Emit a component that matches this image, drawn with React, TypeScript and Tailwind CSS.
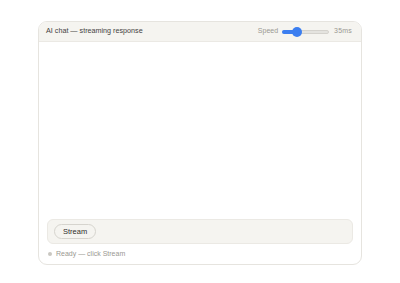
import { useState } from 'react';

export default function App() {
    const [speed, setSpeed] = useState(35);
    const pct = ((speed - 5) / (100 - 5)) * 100;

    return (
        <div className="w-[400px] h-[283px] bg-white pt-[21px] pl-[38px]" style={{ fontFamily: '"Liberation Sans", Arial, sans-serif' }}>
            <div className="w-[324px] h-[244px] rounded-[9px] border border-[#e6e4df] overflow-hidden flex flex-col">
                {/* Header */}
                <div className="h-[20px] bg-[#f5f4f0] border-b border-[#ebe9e4] flex items-center justify-between pl-[7px] pr-[9px]">
                    <span className="text-[7.2px] text-[#44423e]">AI chat — streaming response</span>
                    <div className="flex items-center gap-[4px]">
                        <span className="text-[7px] text-[#9a9892]">Speed</span>
                        <div className="relative w-[47px] h-[10px] flex items-center">
                            <div className="w-full h-[4px] rounded-full bg-[#e4e3df] border border-[#d4d2cd]" />
                            <div className="absolute left-0 h-[4px] rounded-full bg-[#3b7ef0]" style={{ width: `${pct}%` }} />
                            <div className="absolute w-[10px] h-[10px] rounded-full bg-[#3b7ef0]" style={{ left: `calc(${pct}% - 5px)` }} />
                            <input
                                type="range"
                                min={5}
                                max={100}
                                value={speed}
                                onChange={e => setSpeed(Number(e.target.value))}
                                className="absolute inset-0 opacity-0 w-full"
                            />
                        </div>
                        <span className="text-[7px] text-[#9a9892] tracking-[0.2px] ml-[1px]">{speed}ms</span>
                    </div>
                </div>

                {/* Messages */}
                <div className="flex-1" />

                {/* Composer */}
                <div className="px-[8px]">
                    <div className="h-[25px] rounded-[6px] bg-[#f5f4f0] border border-[#ebe9e4] flex items-center pl-[6px]">
                        <button className="h-[15px] px-[8px] rounded-full border border-[#d6d4ce] bg-[#f5f4f0] text-[7.5px] text-[#2f2d2a] leading-none">
                            Stream
                        </button>
                    </div>
                </div>
                <div className="h-[20px] flex items-center pl-[9px] gap-[4px]">
                    <span className="w-[4px] h-[4px] rounded-full bg-[#c9c7c1]" />
                    <span className="text-[7px] text-[#9a9892]">Ready — click Stream</span>
                </div>
            </div>
        </div>
    );
}
